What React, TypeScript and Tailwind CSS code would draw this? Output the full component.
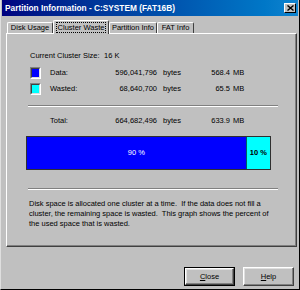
import React from "react";

const rows = [
  { label: "Data:", color: "bg-[#0000ff]", bytes: "596,041,796", mb: "568.4" },
  { label: "Wasted:", color: "bg-[#00ffff]", bytes: "68,640,700", mb: "65.5" },
];

const tabs = ["Disk Usage", "Cluster Waste", "Partition Info", "FAT Info"];
const tabWidths = ["w-[46px]", "w-[56px]", "w-[48px]", "w-[37px]"];

const Etched = () => (
  <div className="ml-[2px] w-[250px] border-t border-t-[#808080] border-b border-b-white" />
);

const StatRow: React.FC<{ label: string; bytes: string; mb: string; swatch?: string }> = ({
  label,
  bytes,
  mb,
  swatch,
}) => (
  <div className="flex items-center h-[12px] pl-[4px]">
    <div className="w-[20px] flex items-center">
      {swatch && (
        <div className="w-[11px] h-[12px] border border-t-[#808080] border-l-[#808080] border-r-white border-b-white">
          <div className={`w-full h-full border border-t-[#404040] border-l-[#404040] border-r-[#dfdfdf] border-b-[#dfdfdf] ${swatch}`} />
        </div>
      )}
    </div>
    <div className="w-[61px]">{label}</div>
    <div className="w-[46px] text-right">{bytes}</div>
    <div className="w-[44px] pl-[6px]">bytes</div>
    <div className="w-[29px] text-right">{mb}</div>
    <div className="pl-[3px]">MB</div>
  </div>
);

const Button: React.FC<{ hot: string; rest: string; isDefault?: boolean }> = ({ hot, rest, isDefault }) => (
  <div className={`w-[51px] h-[19px] ${isDefault ? "border border-black" : ""}`}>
    <div className="w-full h-full border border-t-white border-l-white border-r-[#404040] border-b-[#404040] shadow-[inset_-1px_-1px_0_#808080,inset_1px_1px_0_#dfdfdf] flex items-center justify-center">
      <span>
        <span className="underline">{hot}</span>
        {rest}
      </span>
    </div>
  </div>
);

export default function App() {
  return (
    <div className="w-[300px] h-[290px] bg-[#c0c0c0] flex flex-col border-l border-l-[#dfdfdf] border-r border-r-black border-b border-b-black text-[7.5px] leading-[10px] text-black font-['Liberation_Sans',Arial,sans-serif]">
      {/* title bar */}
      <div className="h-[16px] ml-px mr-px flex items-center justify-between bg-gradient-to-r from-[#000080] to-[#1084d0]">
        <span className="pl-[3px] text-white font-bold text-[8.3px]">Partition Information - C:SYSTEM (FAT16B)</span>
        <div className="mr-[2px] w-[12px] h-[10px] bg-[#c0c0c0] border border-t-white border-l-white border-r-black border-b-black flex items-center justify-center">
          <svg width="7" height="6" viewBox="0 0 7 6">
            <path d="M0.5 0.5 L6.5 5.5 M6.5 0.5 L0.5 5.5" stroke="black" strokeWidth="1.4" />
          </svg>
        </div>
      </div>

      {/* tabs */}
      <div className="flex items-end pl-[6px] mt-[3px] h-[14px] relative z-10">
        {tabs.map((t, i) =>
          i === 1 ? (
            <div
              key={t}
              className={`${tabWidths[i]} h-[14px] -mb-px bg-[#c0c0c0] border-l border-t border-l-white border-t-white border-r border-r-[#404040] rounded-t-[2px] flex items-center justify-center`}
            >
              <span className="border border-dotted border-black px-px leading-[9px]">{t}</span>
            </div>
          ) : (
            <div
              key={t}
              className={`${tabWidths[i]} h-[11px] border-l border-t border-l-white border-t-white border-r border-r-[#404040] rounded-t-[2px] flex items-center justify-center`}
            >
              {t}
            </div>
          )
        )}
      </div>

      {/* panel */}
      <div className="ml-[5px] w-[291px] h-[214px] border border-t-white border-l-white border-r-[#404040] border-b-[#404040] shadow-[inset_-1px_-1px_0_#808080] pl-[19px] pt-[17px] flex flex-col">
        <div className="flex h-[10px] pl-[4px]">
          <div className="w-[74px]">Current Cluster Size:</div>
          <div>16 K</div>
        </div>

        <div className="mt-[6px] flex flex-col gap-[4px]">
          {rows.map((r) => (
            <StatRow key={r.label} label={r.label} bytes={r.bytes} mb={r.mb} swatch={r.color} />
          ))}
        </div>

        <div className="mt-[10px]">
          <Etched />
        </div>

        <div className="mt-[8px]">
          <StatRow label="Total:" bytes="664,682,496" mb="633.9" />
        </div>

        <div className="mt-[9px] w-[245px] h-[34px] border border-[#303030] flex">
          <div className="w-[90%] bg-[#0000ff] text-white flex items-center justify-center">90 %</div>
          <div className="flex-1 bg-[#00ffff] border-l border-l-[#006060] font-bold flex items-center justify-center">10 %</div>
        </div>

        <div className="mt-[18px]">
          <Etched />
        </div>

        <p className="mt-[9px] pl-[3px] w-[250px]">
          Disk space is allocated one cluster at a time.&nbsp; If the data does not fill a cluster, the remaining
          space is wasted.&nbsp; This graph shows the percent of the used space that is wasted.
        </p>
      </div>

      {/* buttons */}
      <div className="flex justify-end gap-[8px] pr-[5px] mt-[20px]">
        <Button hot="C" rest="lose" isDefault />
        <Button hot="H" rest="elp" />
      </div>
    </div>
  );
}
